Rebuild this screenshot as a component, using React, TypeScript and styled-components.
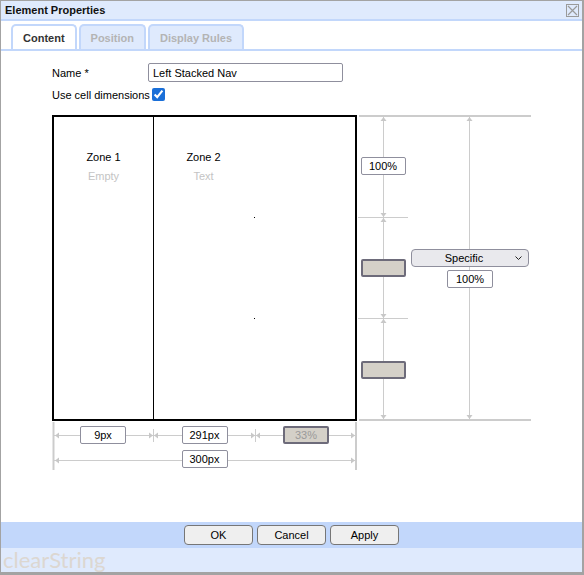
import React from 'react'
import styled, { createGlobalStyle } from 'styled-components'

const GlobalStyle = createGlobalStyle`
  html, body {
    margin: 0;
    padding: 0;
    background: #fff;
  }
  body {
    font-family: 'Liberation Sans', Arial, sans-serif;
    font-size: 11px;
    color: #000;
  }
  * {
    box-sizing: border-box;
  }
`

const paleBlue = '#dfeafd'
const edgeBlue = '#c2d7fb'
const guide = '#cccccc'

const Window = styled.div`
  width: 584px;
  height: 575px;
  display: flex;
  flex-direction: column;
  border-style: solid;
  border-color: #a3a3a3;
  border-width: 1px 2px 3px 1px;
  background: #fff;
  overflow: hidden;
`
const TitleBar = styled.div`
  height: 20px;
  flex: none;
  display: flex;
  align-items: center;
  justify-content: space-between;
  padding: 0 3px 0 4px;
  background: ${paleBlue};
  border-bottom: 2px solid ${edgeBlue};
`
const Title = styled.span`
  font-weight: bold;
  font-size: 11px;
  color: #111;
`
const TabStrip = styled.div`
  height: 30px;
  flex: none;
  display: flex;
  align-items: flex-end;
  gap: 2px;
  padding-left: 10px;
  border-bottom: 2px solid ${edgeBlue};
`
const Tab = styled.div<{ $active?: boolean }>`
  height: 25px;
  padding: 1px 10px 0;
  display: flex;
  align-items: center;
  border: 2px solid ${edgeBlue};
  border-bottom: none;
  border-radius: 5px 5px 0 0;
  background: ${(p) => (p.$active ? '#fff' : paleBlue)};
  color: ${(p) => (p.$active ? '#333' : '#b4b4b4')};
  font-weight: bold;
  font-size: 11px;
`
const Content = styled.div`
  flex: 1;
  padding: 12px 0 0 51px;
`
const FormGrid = styled.div`
  display: grid;
  grid-template-columns: 96px auto;
  grid-template-rows: 19px 13px;
  row-gap: 6px;
  align-items: center;
`
const Label = styled.label`
  font-size: 11px;
  color: #000;
  white-space: nowrap;
`
const TextInput = styled.input`
  width: 195px;
  height: 19px;
  border: 1px solid #8f8f9d;
  border-radius: 2px;
  padding: 0 4px;
  font: 11px 'Liberation Sans', Arial, sans-serif;
  color: #000;
`
const Check = styled.input`
  width: 13px;
  height: 13px;
  margin: 0 0 0 4px;
  accent-color: #1a6fd8;
`
const Diagram = styled.div`
  margin-top: 14px;
  display: grid;
  grid-template-columns: 305px 174px;
  grid-template-rows: 306px 50px;
`
const Frame = styled.div`
  border: 2px solid #000;
  display: flex;
`
const Zone = styled.div<{ $width?: number }>`
  position: relative;
  ${(p) => (p.$width ? `width: ${p.$width}px; flex: none;` : 'flex: 1;')}
  padding-top: 31px;
`
const Divider = styled.div`
  width: 1px;
  background: #000;
`
const ZoneLabel = styled.div`
  width: 99px;
  display: flex;
  flex-direction: column;
  align-items: center;
  line-height: 19px;
`
const ZoneName = styled.span`
  color: #000;
`
const ZoneKind = styled.span`
  color: #c4c4c4;
`
const Marker = styled.span<{ $top: number }>`
  position: absolute;
  left: 100px;
  top: ${(p) => p.$top}px;
  width: 1px;
  height: 1px;
  background: #000;
`
const SideRuler = styled.div`
  position: relative;
  display: grid;
  grid-template-columns: 52px 1fr;
`
const Guides = styled.svg`
  position: absolute;
  left: 0;
  top: 0;
  z-index: 0;
`
const RowColumn = styled.div`
  position: relative;
  z-index: 1;
  display: grid;
  grid-template-rows: 102px 101px 103px;
  justify-items: center;
  align-items: center;
`
const OuterColumn = styled.div`
  position: relative;
  z-index: 1;
  display: flex;
  flex-direction: column;
  align-items: center;
  justify-content: center;
  gap: 3px;
`
const BottomRuler = styled.div`
  position: relative;
  display: grid;
  grid-template-columns: 102px 101px 102px;
  grid-template-rows: 28px 20px;
  justify-items: center;
  align-items: center;
`
const SpanCell = styled.div`
  position: relative;
  z-index: 1;
  grid-column: 2;
`
const Cell = styled.div`
  position: relative;
  z-index: 1;
`
const SizeBox = styled.input<{ $muted?: boolean; $w?: number }>`
  width: ${(p) => p.$w ?? 46}px;
  height: 18px;
  padding: 0;
  text-align: center;
  font: 11px 'Liberation Sans', Arial, sans-serif;
  border-radius: 2px;
  border: ${(p) => (p.$muted ? '2px solid #6d6b7a' : '1px solid #8f8f9d')};
  background: ${(p) => (p.$muted ? '#d4d0c8' : '#fff')};
  color: ${(p) => (p.$muted ? '#9a9a9a' : '#000')};
`
const SelectWrap = styled.div`
  position: relative;
  width: 118px;
  height: 18px;
`
const Select = styled.select`
  appearance: none;
  width: 100%;
  height: 100%;
  border: 1px solid #8f8f9d;
  border-radius: 4px;
  background: #e9e9ed;
  font: 11px 'Liberation Sans', Arial, sans-serif;
  color: #000;
  text-align: center;
  text-align-last: center;
  padding: 0 16px 0 4px;
`
const Chevron = styled.svg`
  position: absolute;
  right: 7px;
  top: 7px;
  pointer-events: none;
`
const ButtonBar = styled.div`
  height: 26px;
  flex: none;
  display: flex;
  align-items: center;
  justify-content: center;
  gap: 4px;
  background: ${edgeBlue};
`
const Button = styled.button`
  width: 69px;
  height: 20px;
  border: 1px solid #767676;
  border-radius: 4px;
  background: #efefef;
  font: 11px 'Liberation Sans', Arial, sans-serif;
  color: #000;
  padding: 0;
`
const Brand = styled.div`
  height: 24px;
  flex: none;
  background: ${paleBlue};
  padding-left: 2px;
  font-family: Lato, 'Open Sans', sans-serif;
  font-size: 22px;
  line-height: 24px;
  color: #dcd7d1;
  overflow: hidden;
`

type Dir = 'up' | 'down' | 'left' | 'right'

// small guide arrow, tip at (x, y)
function Arrow({ x, y, dir }: { x: number; y: number; dir: Dir }) {
  const pts =
    dir === 'up'
      ? `${x},${y} ${x - 3},${y + 4} ${x + 3},${y + 4}`
      : dir === 'down'
      ? `${x},${y} ${x - 3},${y - 4} ${x + 3},${y - 4}`
      : dir === 'left'
      ? `${x},${y} ${x + 4},${y - 3} ${x + 4},${y + 3}`
      : `${x},${y} ${x - 4},${y - 3} ${x - 4},${y + 3}`
  return <polygon points={pts} fill="#c8c8c8" />
}

function SideGuides() {
  return (
    <Guides width="174" height="306">
      <rect x="2" y="0" width="172" height="2" fill={guide} />
      <rect x="2" y="304" width="172" height="2" fill={guide} />
      <line x1="26.5" y1="2" x2="26.5" y2="304" stroke={guide} />
      <line x1="1" y1="102.5" x2="51" y2="102.5" stroke={guide} />
      <line x1="1" y1="203.5" x2="51" y2="203.5" stroke={guide} />
      <Arrow x={26.5} y={2} dir="up" />
      <Arrow x={26.5} y={102} dir="down" />
      <Arrow x={26.5} y={103} dir="up" />
      <Arrow x={26.5} y={203} dir="down" />
      <Arrow x={26.5} y={204} dir="up" />
      <Arrow x={26.5} y={304} dir="down" />
      <line x1="112.5" y1="2" x2="112.5" y2="304" stroke={guide} />
      <Arrow x={112.5} y={2} dir="up" />
      <Arrow x={112.5} y={304} dir="down" />
    </Guides>
  )
}

function BottomGuides() {
  return (
    <Guides width="305" height="50">
      <line x1="1.5" y1="1" x2="1.5" y2="49" stroke={guide} strokeWidth="2" />
      <line x1="304" y1="1" x2="304" y2="49" stroke={guide} strokeWidth="2" />
      <line x1="101.5" y1="8" x2="101.5" y2="21" stroke={guide} />
      <line x1="203.5" y1="8" x2="203.5" y2="21" stroke={guide} />
      <line x1="2" y1="14.5" x2="304" y2="14.5" stroke={guide} />
      <Arrow x={3} y={14.5} dir="left" />
      <Arrow x={101} y={14.5} dir="right" />
      <Arrow x={102} y={14.5} dir="left" />
      <Arrow x={203} y={14.5} dir="right" />
      <Arrow x={204} y={14.5} dir="left" />
      <Arrow x={303} y={14.5} dir="right" />
      <line x1="2" y1="39.5" x2="304" y2="39.5" stroke={guide} />
      <Arrow x={3} y={39.5} dir="left" />
      <Arrow x={303} y={39.5} dir="right" />
    </Guides>
  )
}

function CloseIcon() {
  return (
    <svg width="13" height="13" viewBox="0 0 13 13">
      <rect x="0.5" y="0.5" width="12" height="12" fill="none" stroke="#9a9a9a" />
      <path d="M2 2 L11 11 M11 2 L2 11" stroke="#9a9a9a" strokeWidth="1.2" />
    </svg>
  )
}

export default function App() {
  return (
    <>
      <GlobalStyle />
      <Window>
        <TitleBar>
          <Title>Element Properties</Title>
          <CloseIcon />
        </TitleBar>
        <TabStrip>
          <Tab $active>Content</Tab>
          <Tab>Position</Tab>
          <Tab>Display Rules</Tab>
        </TabStrip>
        <Content>
          <FormGrid>
            <Label>Name *</Label>
            <TextInput defaultValue="Left Stacked Nav" />
            <Label>Use cell dimensions</Label>
            <Check type="checkbox" defaultChecked />
          </FormGrid>
          <Diagram>
            <Frame>
              <Zone $width={99}>
                <ZoneLabel>
                  <ZoneName>Zone 1</ZoneName>
                  <ZoneKind>Empty</ZoneKind>
                </ZoneLabel>
              </Zone>
              <Divider />
              <Zone>
                <ZoneLabel>
                  <ZoneName>Zone 2</ZoneName>
                  <ZoneKind>Text</ZoneKind>
                </ZoneLabel>
                <Marker $top={100} />
                <Marker $top={201} />
              </Zone>
            </Frame>
            <SideRuler>
              <SideGuides />
              <RowColumn>
                <SizeBox $w={45} readOnly value="100%" />
                <SizeBox $w={45} $muted readOnly value="" />
                <SizeBox $w={45} $muted readOnly value="" />
              </RowColumn>
              <OuterColumn>
                <SelectWrap>
                  <Select defaultValue="Specific">
                    <option>Specific</option>
                    <option>Auto</option>
                  </Select>
                  <Chevron width="7" height="4" viewBox="0 0 7 4">
                    <path d="M0.5 0.5 L3.5 3.5 L6.5 0.5" fill="none" stroke="#222" strokeWidth="1" />
                  </Chevron>
                </SelectWrap>
                <SizeBox readOnly value="100%" />
              </OuterColumn>
            </SideRuler>
            <BottomRuler>
              <BottomGuides />
              <Cell>
                <SizeBox readOnly value="9px" />
              </Cell>
              <Cell>
                <SizeBox readOnly value="291px" />
              </Cell>
              <Cell>
                <SizeBox $muted readOnly value="33%" />
              </Cell>
              <SpanCell>
                <SizeBox readOnly value="300px" />
              </SpanCell>
            </BottomRuler>
          </Diagram>
        </Content>
        <ButtonBar>
          <Button>OK</Button>
          <Button>Cancel</Button>
          <Button>Apply</Button>
        </ButtonBar>
        <Brand>clearString</Brand>
      </Window>
    </>
  )
}
